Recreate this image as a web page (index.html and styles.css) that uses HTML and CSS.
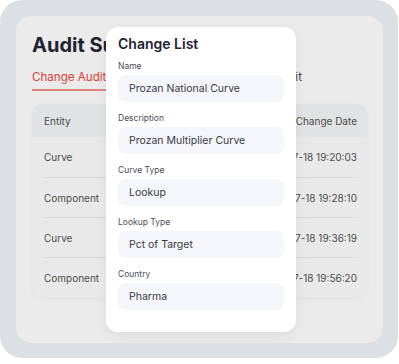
FILE: index.html
```html
<!DOCTYPE html>
<html lang="en">
  <head>
    <meta charset="UTF-8" />
    <title>Audit Summary</title>
    <link rel="stylesheet" href="styles.css">
  </head>
  <body>
    <div class="frame">
      <div class="panel">
        <h1 class="title">Audit Summary</h1>
        <div class="tabs">
          <span class="tab active">Change Audit</span>
          <span class="tab">Rate Audit</span>
          <span class="tab">Plan Audit</span>
        </div>
        <div class="card">
          <div class="row head">
            <span class="c-entity">Entity</span>
            <span class="c-date">Change Date</span>
          </div>
          <div class="row">
            <span class="c-entity">Curve</span>
            <span class="c-date">2023-07-18 19:20:03</span>
          </div>
          <div class="row">
            <span class="c-entity">Component</span>
            <span class="c-date">2023-07-18 19:28:10</span>
          </div>
          <div class="row">
            <span class="c-entity">Curve</span>
            <span class="c-date">2023-07-18 19:36:19</span>
          </div>
          <div class="row">
            <span class="c-entity">Component</span>
            <span class="c-date">2023-07-18 19:56:20</span>
          </div>
        </div>
      </div>
    </div>

    <!-- modal -->
    <div class="modal">
      <h2 class="modal-title">Change List</h2>
      <div class="field">
        <label>Name</label>
        <div class="value">Prozan National Curve</div>
      </div>
      <div class="field">
        <label>Description</label>
        <div class="value">Prozan Multiplier Curve</div>
      </div>
      <div class="field">
        <label>Curve Type</label>
        <div class="value">Lookup</div>
      </div>
      <div class="field">
        <label>Lookup Type</label>
        <div class="value">Pct of Target</div>
      </div>
      <div class="field">
        <label>Country</label>
        <div class="value">Pharma</div>
      </div>
    </div>
  </body>
</html>
```

FILE: styles.css
```css
body {
  margin: 0;
  background: #fff;
  font-family: Inter, "Noto Sans", sans-serif;
}
.frame {
  width: 398px;
  height: 358px;
  box-sizing: border-box;
  padding: 16px 15px 15px 16px;
  background: #dcdfe3;
  border-radius: 22px;
}
.panel {
  height: 100%;
  box-sizing: border-box;
  padding: 15px 16px 0 16px;
  background: #ebebeb;
  border-radius: 16px;
  overflow: hidden;
}
.title {
  margin: 0;
  font-size: 20px;
  line-height: 28px;
  font-weight: 700;
  color: #1f2232;
}
.tabs {
  display: flex;
  gap: 42px;
  margin-top: 9px;
}
.tab {
  font-size: 11.6px;
  line-height: 18px;
  color: #4a4a4a;
  padding-bottom: 3px;
  border-bottom: 2px solid transparent;
}
.tab.active {
  color: #dd4236;
  border-bottom-color: #e2837b;
}
.card {
  margin-top: 13px;
  background: #e9e9e9;
  border-radius: 10px;
  overflow: hidden;
  box-shadow: 0 2px 6px rgba(0, 0, 0, 0.04);
}
.row {
  display: flex;
  align-items: center;
  justify-content: space-between;
  height: 39px;
  margin: 0 12px;
  border-top: 1px solid #dadada;
  font-size: 10px;
  color: #4b4b4b;
}
.row.head {
  height: 33px;
  margin: 0;
  padding: 0 10px 0 12px;
  border-top: none;
  background: #e1e2e4;
}
.row.head + .row {
  border-top: none;
  height: 40px;
}
.c-date {
  width: 60px;
  white-space: nowrap;
  display: flex;
  justify-content: flex-end;
  margin-right: -2px;
}
.row.head .c-date {
  margin-right: 0;
}
.modal {
  position: absolute;
  left: 106px;
  top: 27px;
  width: 190px;
  height: 305px;
  box-sizing: border-box;
  padding: 7px 12px 0 12px;
  background: #fff;
  border-radius: 12px;
  box-shadow: 0 4px 14px rgba(0, 0, 0, 0.06);
}
.modal-title {
  margin: 0 0 6px;
  font-size: 14px;
  line-height: 20px;
  font-weight: 600;
  color: #1f2232;
}
.field + .field {
  margin-top: 10px;
}
.field label {
  display: block;
  font-size: 8.5px;
  line-height: 12px;
  color: #4a4d57;
  margin-bottom: 3px;
}
.field .value {
  height: 27px;
  box-sizing: border-box;
  padding-left: 11px;
  display: flex;
  align-items: center;
  background: #f5f6fa;
  border-radius: 8px;
  font-size: 10.5px;
  color: #363a45;
}
```
